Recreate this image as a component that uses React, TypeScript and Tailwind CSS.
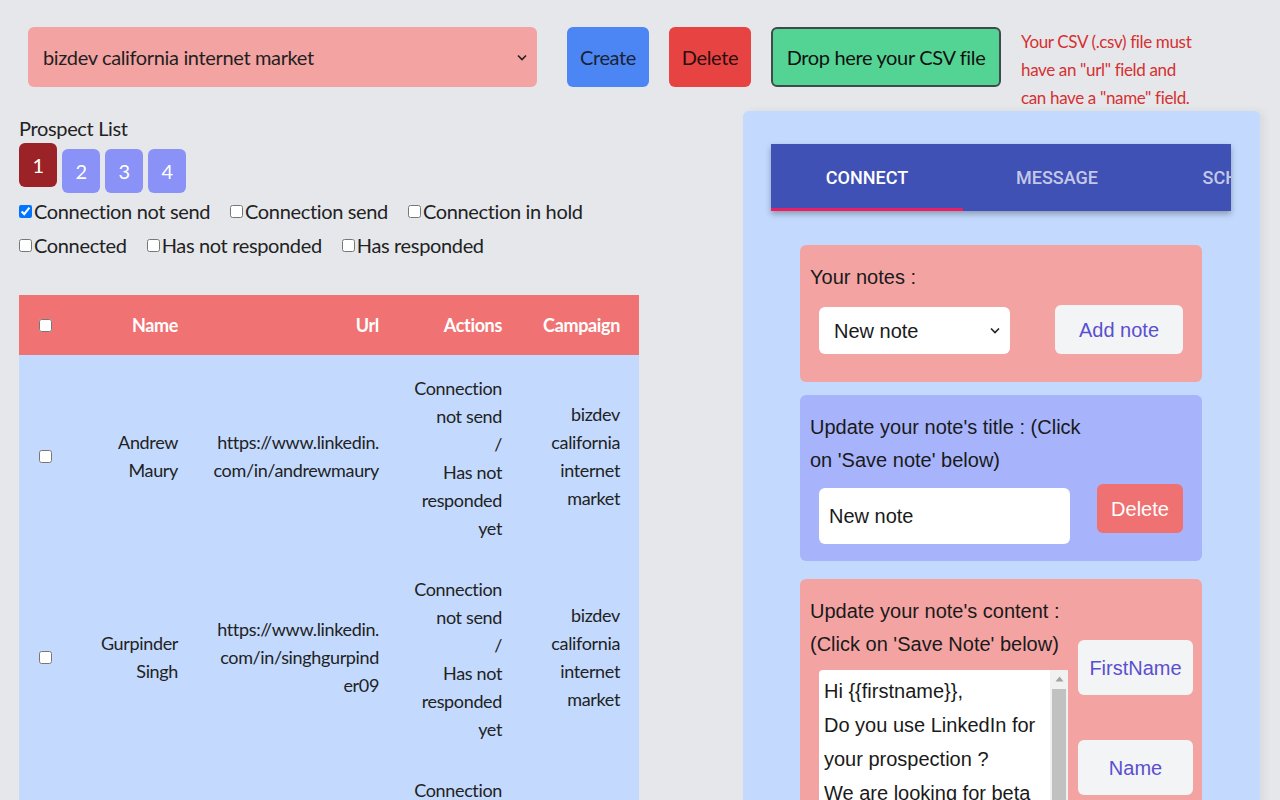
import { useState } from "react";

const filters = [
  ["Connection not send", "Connection send", "Connection in hold"],
  ["Connected", "Has not responded", "Has responded"],
];

const prospects = [
  {
    name: ["Andrew", "Maury"],
    url: ["https://www.linkedin.", "com/in/andrewmaury"],
  },
  {
    name: ["Gurpinder", "Singh"],
    url: ["https://www.linkedin.", "com/in/singhgurpind", "er09"],
  },
  {
    name: ["Kevin", "Lee"],
    url: ["https://www.linkedin.", "com/in/kevinlee"],
  },
];

const lines = (items: string[]) =>
  items.map((l, i) => (
    <span key={i} className="block">
      {l}
    </span>
  ));

export default function App() {
  const [checked, setChecked] = useState<string[]>(["Connection not send"]);
  const [page, setPage] = useState(1);
  const [title, setTitle] = useState("New note");
  const [content, setContent] = useState(
    "Hi {{firstname}},\nDo you use LinkedIn for your prospection ?\nWe are looking for beta testers for our new tool, would you be interested ?"
  );

  const toggle = (f: string) =>
    setChecked((c) => (c.includes(f) ? c.filter((x) => x !== f) : [...c, f]));

  return (
    <div className="h-[800px] overflow-hidden bg-[#e5e7eb] font-['Lato','Liberation_Sans',sans-serif] tracking-[-0.35px] text-[#222]">
      {/* top bar */}
      <div className="flex items-start pl-[28px] pt-[27px]">
        <div className="relative w-[509px] h-[60px] rounded-md bg-[#f4a3a3]">
          <select className="w-full h-full appearance-none bg-transparent pl-[15px] text-[20px] text-[#1f1f1f] outline-none">
            <option>bizdev california internet market</option>
          </select>
          <svg
            className="absolute right-[10px] top-[27px] pointer-events-none"
            width="10"
            height="7"
            viewBox="0 0 10 7"
          >
            <path d="M1 1.5l4 4 4-4" stroke="#222" strokeWidth="1.6" fill="none" />
          </svg>
        </div>
        <button className="ml-[30px] w-[82px] h-[60px] rounded-md bg-[#4c86f5] text-[20px] text-[#1a2233]">
          Create
        </button>
        <button className="ml-[20px] w-[82px] h-[60px] rounded-md bg-[#e84343] text-[20px] text-[#2a0d0d]">
          Delete
        </button>
        <button className="ml-[20px] w-[230px] h-[60px] rounded-md border-2 border-[#3f4a4a] bg-[#54d494] text-[20px] text-[#111]">
          Drop here your CSV file
        </button>
        <p className="ml-[20px] w-[182px] pt-[1px] text-[17px] leading-[28px] text-[#d63030]">
          Your CSV (.csv) file must have an "url" field and can have a "name"
          field.
        </p>
      </div>

      <div className="flex items-start">
        {/* left column */}
        <div className="ml-[19px] w-[620px] pt-[2px]">
          <div className="text-[20px] leading-[28px]">Prospect List</div>
          <div className="flex items-start gap-[5px] mt-[1px]">
            {[1, 2, 3, 4].map((n) => (
              <button
                key={n}
                onClick={() => setPage(n)}
                className={
                  n === page
                    ? "w-[38px] h-[44px] rounded-md bg-[#9b2226] text-white text-[20px]"
                    : "mt-[6px] w-[38px] h-[44px] rounded-md bg-[#8a92f8] text-white text-[20px]"
                }
              >
                {n}
              </button>
            ))}
          </div>
          <div className="mt-[1px]">
            {filters.map((row, i) => (
              <div key={i} className="flex h-[34px] items-center text-[20px]">
                {row.map((f) => (
                  <label key={f} className="flex items-center mr-[20px]">
                    <input
                      type="checkbox"
                      checked={checked.includes(f)}
                      onChange={() => toggle(f)}
                      className="w-[13px] h-[13px] m-0 mr-[2px]"
                    />
                    {f}
                  </label>
                ))}
              </div>
            ))}
          </div>

          <table className="mt-[33px] w-[620px] table-fixed border-collapse text-[18px] leading-[28px]">
            <colgroup>
              <col className="w-[52px]" />
              <col className="w-[119px]" />
              <col className="w-[201px]" />
              <col className="w-[123px]" />
              <col className="w-[125px]" />
            </colgroup>
            <thead>
              <tr className="h-[60px] bg-[#f07272] text-white font-bold">
                <th className="text-center align-middle">
                  <input type="checkbox" className="w-[13px] h-[13px] -mt-[6px]" />
                </th>
                <th className="text-right pr-[12px]">Name</th>
                <th className="text-right pr-[12px]">Url</th>
                <th className="text-right pr-[12px]">Actions</th>
                <th className="text-right pr-[19px]">Campaign</th>
              </tr>
            </thead>
            <tbody className="bg-[#c3dafe] text-[#222]">
              {prospects.map((p, i) => (
                <tr key={i}>
                  <td className="text-center align-middle">
                    <input type="checkbox" className="w-[13px] h-[13px]" />
                  </td>
                  <td className="text-right pr-[12px] align-middle">{lines(p.name)}</td>
                  <td className="text-right pr-[12px] align-middle">{lines(p.url)}</td>
                  <td className="text-right pr-[12px] align-middle pt-[19px] pb-[14px]">
                    {lines(["Connection", "not send", "/", "Has not", "responded", "yet"])}
                  </td>
                  <td className="text-right pr-[19px] align-middle">
                    {lines(["bizdev", "california", "internet", "market"])}
                  </td>
                </tr>
              ))}
            </tbody>
          </table>
        </div>

        {/* right panel */}
        <div className="ml-[104px] -mt-[1px] w-[517px] h-[700px] rounded-md bg-[#c3dafe] shadow-[4px_0_8px_rgba(0,0,0,0.06)] pt-[33px] font-['Liberation_Sans',Arial,sans-serif] tracking-normal">
          <div className="ml-[28px] w-[460px] h-[67px] bg-[#3f51b5] shadow-[0_3px_6px_rgba(0,0,0,0.3)] overflow-hidden flex font-['Roboto',sans-serif] font-medium text-[18px] uppercase">
            <div className="relative w-[192px] shrink-0 flex items-center justify-center text-white">
              Connect
              <div className="absolute left-0 right-0 bottom-0 h-[3px] bg-[#e91e63]" />
            </div>
            <div className="w-[188px] shrink-0 flex items-center justify-center text-white/70">
              Message
            </div>
            <div className="w-[192px] shrink-0 flex items-center justify-center text-white/70">
              Schedule
            </div>
          </div>

          {/* notes select */}
          <div className="ml-[57px] mt-[34px] w-[402px] h-[137px] rounded-md bg-[#f4a3a3] pl-[10px] pt-[17px] text-[20px] text-[#1a1a1a]">
            <div className="leading-[30px]">Your notes :</div>
            <div className="flex items-start mt-[13px]">
              <div className="relative ml-[9px] mt-[2px] w-[191px] h-[47px] rounded-md bg-white">
                <select className="w-full h-full appearance-none bg-transparent pl-[15px] text-[20px] outline-none">
                  <option>New note</option>
                </select>
                <svg
                  className="absolute right-[10px] top-[20px] pointer-events-none"
                  width="10"
                  height="7"
                  viewBox="0 0 10 7"
                >
                  <path d="M1 1.5l4 4 4-4" stroke="#222" strokeWidth="1.6" fill="none" />
                </svg>
              </div>
              <button className="ml-[45px] w-[128px] h-[49px] rounded-md bg-[#f3f4f6] text-[20px] text-[#5a4fcf]">
                Add note
              </button>
            </div>
          </div>

          {/* title */}
          <div className="ml-[57px] mt-[13px] w-[402px] h-[166px] rounded-md bg-[#a7b4fc] pl-[10px] pt-[16px] text-[20px] text-[#1a1a1a]">
            <div className="w-[285px] leading-[33px]">
              Update your note's title : (Click on 'Save note' below)
            </div>
            <div className="flex items-start mt-[5px]">
              <input
                value={title}
                onChange={(e) => setTitle(e.target.value)}
                className="ml-[9px] mt-[6px] w-[251px] h-[56px] rounded-md bg-white pl-[10px] text-[20px] outline-none"
              />
              <button className="ml-[27px] mt-[2px] w-[86px] h-[49px] rounded-md bg-[#f07171] text-white text-[20px]">
                Delete
              </button>
            </div>
          </div>

          {/* content */}
          <div className="ml-[57px] mt-[18px] w-[402px] h-[300px] rounded-md bg-[#f4a3a3] pl-[10px] pt-[16px] text-[20px] text-[#1a1a1a] flex items-start">
            <div>
              <div className="w-[250px] leading-[33px]">
                Update your note's content : (Click on 'Save Note' below)
              </div>
              <div className="ml-[9px] mt-[9px] w-[249px] h-[200px] rounded-sm bg-white flex">
                <textarea
                  value={content}
                  onChange={(e) => setContent(e.target.value)}
                  className="flex-1 h-full pl-[5px] pt-[4px] text-[20px] leading-[34px] resize-none outline-none overflow-hidden bg-transparent"
                />
                <div className="w-[18px] h-full bg-[#f1f1f1] flex flex-col items-center">
                  <svg className="mt-[6px]" width="9" height="6" viewBox="0 0 9 6">
                    <path d="M4.5 0.5L8.5 5.5H0.5Z" fill="#a3a3a3" />
                  </svg>
                  <div className="mt-[7px] w-[14px] flex-1 bg-[#c1c1c1]" />
                </div>
              </div>
            </div>
            <div className="ml-[10px] mt-[45px] flex flex-col gap-[45px]">
              <button className="w-[115px] h-[55px] rounded-md bg-[#f3f4f6] text-[20px] text-[#5a4fcf]">
                FirstName
              </button>
              <button className="w-[115px] h-[55px] rounded-md bg-[#f3f4f6] text-[20px] text-[#5a4fcf]">
                Name
              </button>
            </div>
          </div>
        </div>
      </div>
    </div>
  );
}
